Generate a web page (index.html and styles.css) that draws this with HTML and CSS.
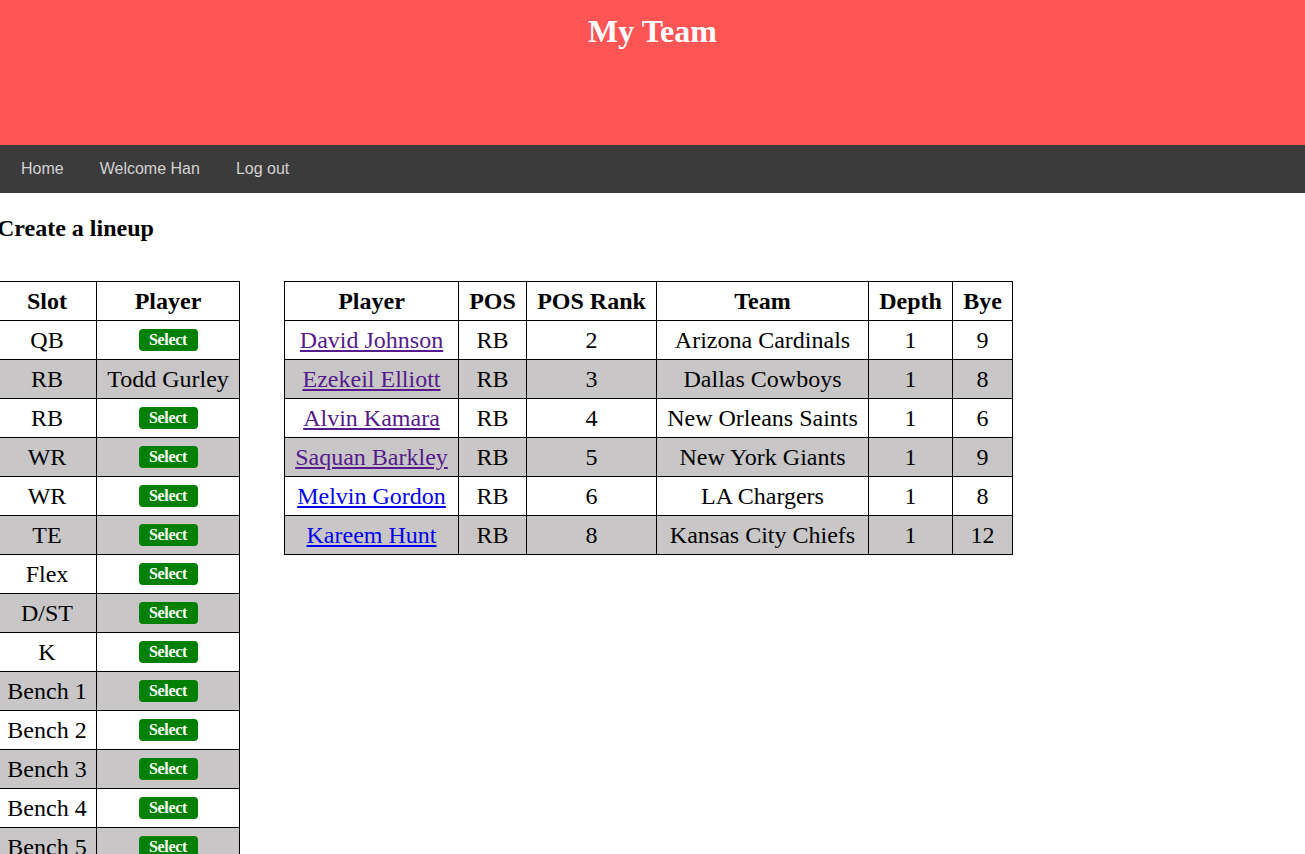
FILE: index.html
```html
<!DOCTYPE html>
<html>
<head>
<meta charset="utf-8">
<title>My Team</title>
<link rel="stylesheet" href="styles.css">
</head>
<body>
<header class="banner">
  <h1 class="banner-title">My Team</h1>
</header>
<nav class="nav">
  <a class="nav-link" href="#">Home</a>
  <a class="nav-link" href="#">Welcome Han</a>
  <a class="nav-link" href="#">Log out</a>
</nav>
<main class="content">
  <h3 class="section-title">Create a lineup</h3>
  <div class="tables">
    <table class="grid lineup">
      <colgroup><col class="c-slot"><col class="c-pick"></colgroup>
      <thead><tr><th>Slot</th><th>Player</th></tr></thead>
      <tbody>
        <tr><td>QB</td><td><button class="select-btn">Select</button></td></tr>
        <tr><td>RB</td><td>Todd Gurley</td></tr>
        <tr><td>RB</td><td><button class="select-btn">Select</button></td></tr>
        <tr><td>WR</td><td><button class="select-btn">Select</button></td></tr>
        <tr><td>WR</td><td><button class="select-btn">Select</button></td></tr>
        <tr><td>TE</td><td><button class="select-btn">Select</button></td></tr>
        <tr><td>Flex</td><td><button class="select-btn">Select</button></td></tr>
        <tr><td>D/ST</td><td><button class="select-btn">Select</button></td></tr>
        <tr><td>K</td><td><button class="select-btn">Select</button></td></tr>
        <tr><td>Bench 1</td><td><button class="select-btn">Select</button></td></tr>
        <tr><td>Bench 2</td><td><button class="select-btn">Select</button></td></tr>
        <tr><td>Bench 3</td><td><button class="select-btn">Select</button></td></tr>
        <tr><td>Bench 4</td><td><button class="select-btn">Select</button></td></tr>
        <tr><td>Bench 5</td><td><button class="select-btn">Select</button></td></tr>
      </tbody>
    </table>
    <table class="grid players">
      <colgroup><col class="c-player"><col class="c-pos"><col class="c-rank"><col class="c-team"><col class="c-depth"><col class="c-bye"></colgroup>
      <thead><tr><th>Player</th><th>POS</th><th>POS Rank</th><th>Team</th><th>Depth</th><th>Bye</th></tr></thead>
      <tbody>
        <tr><td><a class="plink visited" href="#">David Johnson</a></td><td>RB</td><td>2</td><td>Arizona Cardinals</td><td>1</td><td>9</td></tr>
        <tr><td><a class="plink visited" href="#">Ezekeil Elliott</a></td><td>RB</td><td>3</td><td>Dallas Cowboys</td><td>1</td><td>8</td></tr>
        <tr><td><a class="plink visited" href="#">Alvin Kamara</a></td><td>RB</td><td>4</td><td>New Orleans Saints</td><td>1</td><td>6</td></tr>
        <tr><td><a class="plink visited" href="#">Saquan Barkley</a></td><td>RB</td><td>5</td><td>New York Giants</td><td>1</td><td>9</td></tr>
        <tr><td><a class="plink" href="#">Melvin Gordon</a></td><td>RB</td><td>6</td><td>LA Chargers</td><td>1</td><td>8</td></tr>
        <tr><td><a class="plink" href="#">Kareem Hunt</a></td><td>RB</td><td>8</td><td>Kansas City Chiefs</td><td>1</td><td>12</td></tr>
      </tbody>
    </table>
  </div>
</main>
</body>
</html>
```
FILE: styles.css
```css
html, body {
  margin: 0;
  padding: 0;
  background: #ffffff;
  font-family: "Liberation Serif", "Times New Roman", serif;
  color: #000;
  overflow: hidden;
}

.banner {
  background: #ff5555;
  height: 145px;
  box-sizing: border-box;
  padding-top: 13px;
}

.banner-title {
  margin: 0;
  text-align: center;
  color: #ffffff;
  font-size: 32px;
  font-weight: bold;
  line-height: 37px;
}

.nav {
  background: #3c3b3c;
  height: 48px;
  display: flex;
  align-items: center;
  padding-left: 21px;
  gap: 36px;
}

.nav-link {
  font-family: "Liberation Sans", Arial, sans-serif;
  font-size: 16px;
  color: #d2d2d2;
  text-decoration: none;
}

.content {
  margin-left: -3px;
}

.section-title {
  margin: 21px 0 0;
  font-size: 24px;
  font-weight: bold;
  line-height: 28px;
}

.tables {
  display: flex;
  align-items: flex-start;
  gap: 44px;
  margin-top: 39px;
}

.grid {
  border-collapse: collapse;
  font-size: 24px;
  table-layout: fixed;
}

.grid th, .grid td {
  border: 1px solid #000;
  height: 38px;
  padding: 0 3px;
  text-align: center;
  white-space: nowrap;
  line-height: 26px;
}

.grid th {
  font-weight: bold;
}

.grid tbody tr:nth-child(even) td {
  background: #c8c6c7;
}

.c-slot { width: 99px; }
.c-pick { width: 143px; }

.c-player { width: 174px; }
.c-pos { width: 68px; }
.c-rank { width: 130px; }
.c-team { width: 212px; }
.c-depth { width: 84px; }
.c-bye { width: 60px; }

.select-btn {
  display: block;
  margin: 0 auto;
  background: #008000;
  color: #ffffff;
  border: none;
  border-radius: 4px;
  font-family: "Liberation Serif", "Times New Roman", serif;
  font-weight: bold;
  font-size: 16px;
  letter-spacing: -0.3px;
  width: 59px;
  height: 22px;
  padding: 0;
  line-height: 22px;
}

.plink {
  color: #0000ee;
  text-decoration: underline;
}

.plink.visited {
  color: #551a8b;
}
```
